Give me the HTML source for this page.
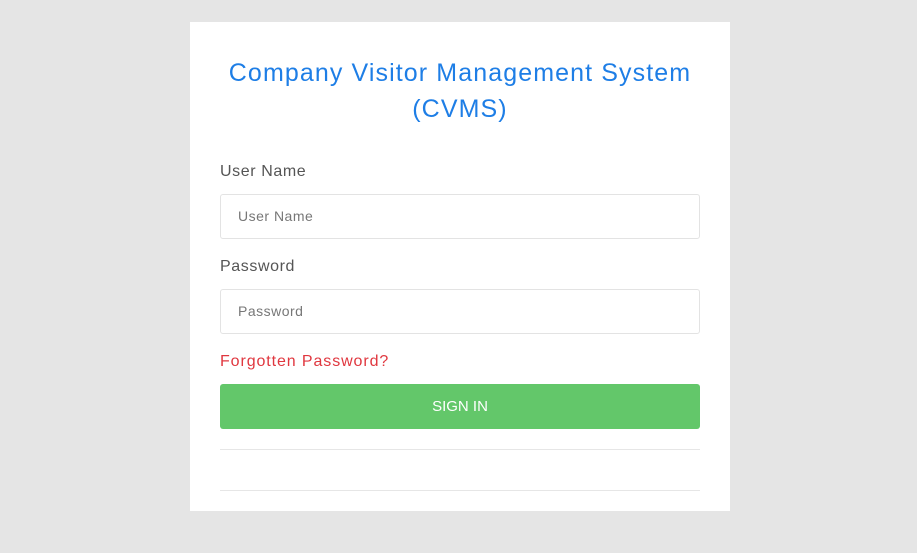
<!DOCTYPE html>
<html><head><style>
body{margin:0;background:#e5e5e5;width:917px;height:553px;position:relative;font-family:"Liberation Sans",sans-serif;overflow:hidden}
.card{position:absolute;left:190px;top:22px;width:540px;height:489px;background:#fff}
.t{position:absolute;left:0;width:540px;text-align:center;color:#1e7ee6;font-size:25px;letter-spacing:1.1px;line-height:36px}
.l{position:absolute;left:30px;font-size:16px;color:#555;letter-spacing:0.6px}
.in{position:absolute;left:30px;width:478px;height:43px;border:1px solid #e3e3e3;border-radius:3px;box-sizing:content-box}
.in span{position:absolute;left:17px;top:13px;font-size:14px;color:#777;letter-spacing:0.5px}
.btn{position:absolute;left:30px;top:362px;width:480px;height:45px;background:#63c76a;border-radius:3px;color:#fff;font-size:15px;text-align:center;line-height:45px}
.hr{position:absolute;left:30px;width:480px;height:1px;background:#e6e6e6}
</style></head><body>
<div class="card">
<div class="t" style="top:33px">Company Visitor Management System</div>
<div class="t" style="top:69px">(CVMS)</div>
<div class="l" style="top:141px">User Name</div>
<div class="in" style="top:172px"><span>User Name</span></div>
<div class="l" style="top:236px">Password</div>
<div class="in" style="top:267px"><span>Password</span></div>
<div class="l" style="top:331px;color:#e0373f;letter-spacing:0.9px">Forgotten Password?</div>
<div class="btn">SIGN IN</div>
<div class="hr" style="top:427px"></div>
<div class="hr" style="top:468px"></div>
</div>
</body></html>
